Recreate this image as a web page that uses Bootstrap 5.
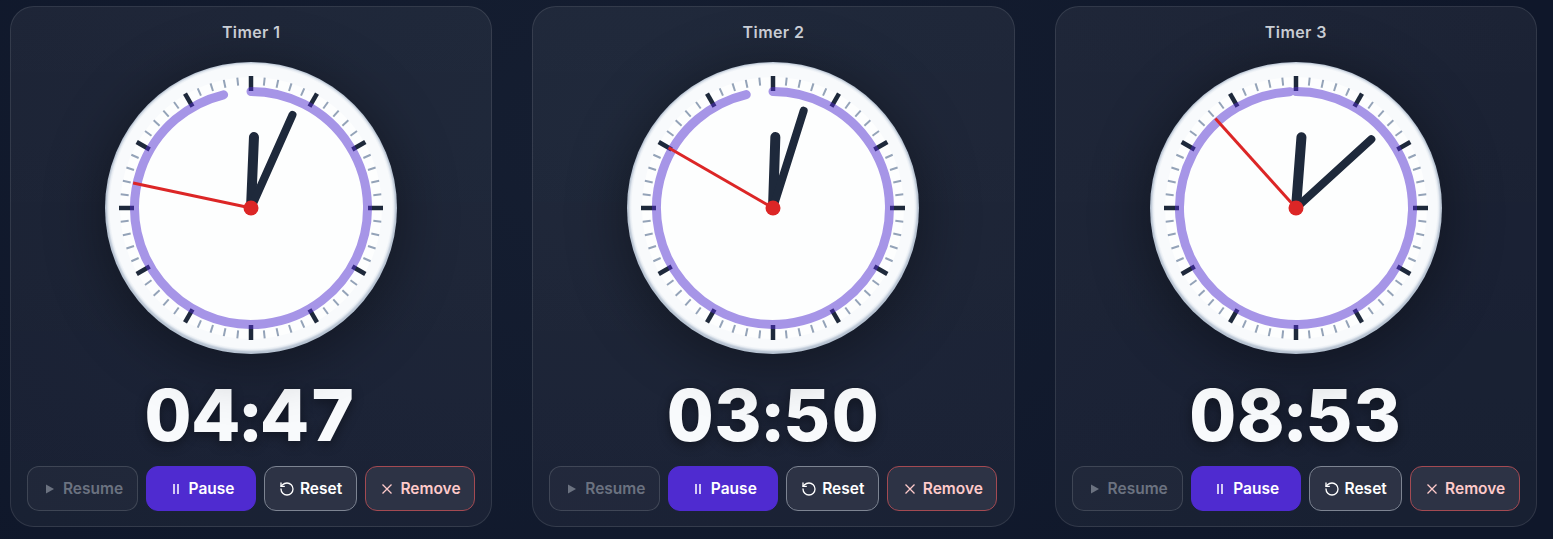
<!DOCTYPE html>
<html lang="en">
<head>
<meta charset="utf-8">
<title>Timers</title>
<link href="https://cdn.jsdelivr.net/npm/bootstrap@5.3.0/dist/css/bootstrap.min.css" rel="stylesheet">
<style>
html,body{height:100%;}
body{background:radial-gradient(ellipse 900px 700px at 40% 25%,#151e31 0%,#0f172a 100%);font-family:Inter,"Liberation Sans",sans-serif;overflow:hidden;}
.board{padding:6px 16px 12px 10px;gap:40px;height:539px;}
.timer-card{flex:1 1 0;min-width:0;height:521px;border:1px solid rgba(255,255,255,.1);border-radius:24px;padding:16px;
  background:linear-gradient(180deg,rgba(255,255,255,.055) 0%,rgba(255,255,255,.04) 100%);}
.timer-title{font-size:16px;font-weight:600;line-height:19px;letter-spacing:.4px;color:#cfd3da;margin:0 0 21px;}
.dial{display:block;width:290px;height:290px;overflow:visible;filter:drop-shadow(0 8px 30px rgba(0,0,0,.4));}
.time-read{font-size:72px;font-weight:800;line-height:88px;letter-spacing:1.5px;color:#f8fafc;margin:18px 0 7px;font-variant-numeric:tabular-nums;text-shadow:0 3px 12px rgba(0,0,0,.4);}
.ctl{height:45px;border-radius:12px;border:1px solid;font-size:15.5px;font-weight:600;line-height:1;padding:0;display:flex;align-items:center;justify-content:center;gap:5px;}
.ctl svg{flex:none;}
.ctl-resume{width:111px;background:rgba(255,255,255,.03);border-color:rgba(255,255,255,.14);color:#6b7280;}
.ctl-pause{width:110px;background:#4f2bd0;border-color:#4f2bd0;color:#fff;}
.ctl-reset{width:93px;background:#2d3345;border-color:#7d8492;color:#fff;}
.ctl-remove{width:110px;background:#2d3345;border-color:#a44a52;color:#fecaca;}
</style>
</head>
<body>
<main class="board d-flex">
  <section class="timer-card d-flex flex-column align-items-center">
    <h2 class="timer-title">Timer 1</h2>
    <svg class="dial" viewBox="-145 -145 290 290" data-h="2.4" data-m="24" data-s="282" data-a="346.4"></svg>
    <div class="time-read">04:47</div>
    <div class="d-flex gap-2 w-100">
      <button class="ctl ctl-resume" disabled><svg width="16" height="16" viewBox="0 0 16 16"><path d="M4 3.5 12 8 4 12.5z" fill="currentColor"/></svg>Resume</button>
      <button class="ctl ctl-pause"><svg width="16" height="16" viewBox="0 0 16 16"><path d="M6 3v10M10 3v10" stroke="currentColor" stroke-width="1.5"/></svg>Pause</button>
      <button class="ctl ctl-reset"><svg width="16" height="16" viewBox="0 0 24 24" fill="none" stroke="currentColor" stroke-width="2" stroke-linecap="round" stroke-linejoin="round"><path d="M3 12a9 9 0 1 0 9-9 9.75 9.75 0 0 0-6.74 2.74L3 8"/><path d="M3 3v5h5"/></svg>Reset</button>
      <button class="ctl ctl-remove"><svg width="16" height="16" viewBox="0 0 16 16"><path d="M3.5 3.5l9 9M12.5 3.5l-9 9" stroke="currentColor" stroke-width="1.3"/></svg>Remove</button>
    </div>
  </section>
  <section class="timer-card d-flex flex-column align-items-center">
    <h2 class="timer-title">Timer 2</h2>
    <svg class="dial" viewBox="-145 -145 290 290" data-h="1.9" data-m="17.5" data-s="300" data-a="346.7"></svg>
    <div class="time-read">03:50</div>
    <div class="d-flex gap-2 w-100">
      <button class="ctl ctl-resume" disabled><svg width="16" height="16" viewBox="0 0 16 16"><path d="M4 3.5 12 8 4 12.5z" fill="currentColor"/></svg>Resume</button>
      <button class="ctl ctl-pause"><svg width="16" height="16" viewBox="0 0 16 16"><path d="M6 3v10M10 3v10" stroke="currentColor" stroke-width="1.5"/></svg>Pause</button>
      <button class="ctl ctl-reset"><svg width="16" height="16" viewBox="0 0 24 24" fill="none" stroke="currentColor" stroke-width="2" stroke-linecap="round" stroke-linejoin="round"><path d="M3 12a9 9 0 1 0 9-9 9.75 9.75 0 0 0-6.74 2.74L3 8"/><path d="M3 3v5h5"/></svg>Reset</button>
      <button class="ctl ctl-remove"><svg width="16" height="16" viewBox="0 0 16 16"><path d="M3.5 3.5l9 9M12.5 3.5l-9 9" stroke="currentColor" stroke-width="1.3"/></svg>Remove</button>
    </div>
  </section>
  <section class="timer-card d-flex flex-column align-items-center">
    <h2 class="timer-title">Timer 3</h2>
    <svg class="dial" viewBox="-145 -145 290 290" data-h="4.4" data-m="47.6" data-s="318" data-a="357"></svg>
    <div class="time-read">08:53</div>
    <div class="d-flex gap-2 w-100">
      <button class="ctl ctl-resume" disabled><svg width="16" height="16" viewBox="0 0 16 16"><path d="M4 3.5 12 8 4 12.5z" fill="currentColor"/></svg>Resume</button>
      <button class="ctl ctl-pause"><svg width="16" height="16" viewBox="0 0 16 16"><path d="M6 3v10M10 3v10" stroke="currentColor" stroke-width="1.5"/></svg>Pause</button>
      <button class="ctl ctl-reset"><svg width="16" height="16" viewBox="0 0 24 24" fill="none" stroke="currentColor" stroke-width="2" stroke-linecap="round" stroke-linejoin="round"><path d="M3 12a9 9 0 1 0 9-9 9.75 9.75 0 0 0-6.74 2.74L3 8"/><path d="M3 3v5h5"/></svg>Reset</button>
      <button class="ctl ctl-remove"><svg width="16" height="16" viewBox="0 0 16 16"><path d="M3.5 3.5l9 9M12.5 3.5l-9 9" stroke="currentColor" stroke-width="1.3"/></svg>Remove</button>
    </div>
  </section>
</main>
<script>
function pt(r,deg){var a=deg*Math.PI/180;return [(r*Math.sin(a)).toFixed(2),(-r*Math.cos(a)).toFixed(2)];}
function seg(r1,r2,deg,w,col){var p=pt(r1,deg),q=pt(r2,deg);return '<line x1="'+p[0]+'" y1="'+p[1]+'" x2="'+q[0]+'" y2="'+q[1]+'" stroke="'+col+'" stroke-width="'+w+'" stroke-linecap="'+(arguments[5]||'butt')+'"/>';}
document.querySelectorAll('.dial').forEach(function(d,n){
  var id='rim'+n;
  var h='<defs><radialGradient id="'+id+'" gradientUnits="userSpaceOnUse" cx="0" cy="-1" r="147"><stop offset=".96" stop-color="#f8fafc"/><stop offset=".972" stop-color="#e8edf3"/><stop offset=".985" stop-color="#bcc7d5"/><stop offset="1" stop-color="#b4c0cf"/></radialGradient></defs>';
  h+='<circle r="146" fill="url(#'+id+')"/><circle r="131" fill="#fdfefe"/>';
  for(var i=0;i<60;i++){ h+= i%5===0 ? seg(132,117,i*6,4.5,'#1e293b') : seg(131,123,i*6,2,'#94a3b8'); }
  var e=pt(116.5,+d.dataset.a);
  h+='<path d="M0 -116.5A116.5 116.5 0 1 1 '+e[0]+' '+e[1]+'" fill="none" stroke="#4f2bd0" stroke-opacity=".5" stroke-width="9" stroke-linecap="round"/>';
  h+=seg(0,71,+d.dataset.h,10,'#1e293b','round');
  h+=seg(0,102,+d.dataset.m,8,'#1e293b','round');
  h+=seg(0,120.5,+d.dataset.s,3,'#dc2626');
  h+='<circle r="7.5" fill="#dc2626"/>';
  d.innerHTML=h;
});
</script>
<script src="https://cdn.jsdelivr.net/npm/bootstrap@5.3.0/dist/js/bootstrap.bundle.min.js"></script>
</body>
</html>
